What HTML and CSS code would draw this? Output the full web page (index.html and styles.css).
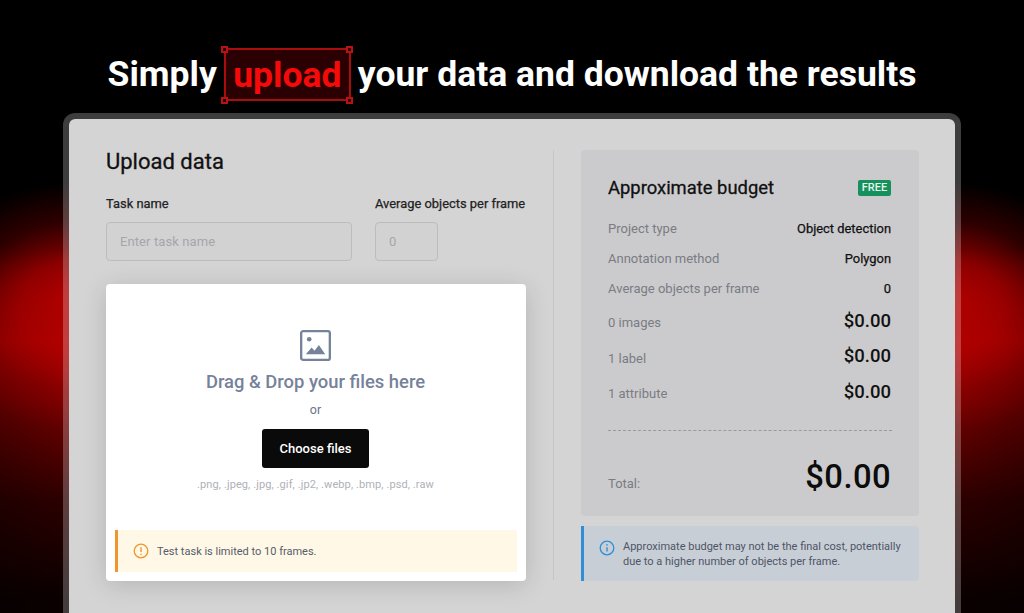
FILE: index.html
```html
<!DOCTYPE html>
<html lang="en">
<head>
<meta charset="utf-8">
<title>Upload data</title>
<link rel="stylesheet" href="styles.css">
</head>
<body>
<div class="stage">
  <h1 class="headline">
    <span>Simply</span>
    <span class="selection">upload
      <i class="handle tl"></i><i class="handle tr"></i><i class="handle bl"></i><i class="handle br"></i>
    </span>
    <span>your data and download the results</span>
  </h1>
  <div class="window">
    <section class="left">
      <h2 class="title">Upload data</h2>
      <div class="fields">
        <div class="field grow">
          <label class="label">Task name</label>
          <div class="input">Enter task name</div>
        </div>
        <div class="field">
          <label class="label">Average objects per frame</label>
          <div class="input small">0</div>
        </div>
      </div>
      <div class="drop">
        <svg class="image-icon" width="31" height="31" viewBox="0 0 32 32" fill="none">
          <rect x="1.2" y="1.2" width="29.6" height="29.6" rx="2" stroke="#76829a" stroke-width="2.4"/>
          <circle cx="9.5" cy="9.5" r="2.4" fill="#76829a"/>
          <path d="M6 25l6-7 3 3.5 4.5-6L26 25z" fill="#76829a"/>
        </svg>
        <div class="drag">Drag &amp; Drop your files here</div>
        <div class="or">or</div>
        <div class="button">Choose files</div>
        <div class="formats">.png, .jpeg, .jpg, .gif, .jp2, .webp, .bmp, .psd, .raw</div>
        <div class="alert warn">
          <svg width="16" height="16" viewBox="0 0 16 16" fill="none">
            <circle cx="8" cy="8" r="6.8" stroke="#f0962e" stroke-width="1.3"/>
            <path d="M8 4.3v4.6" stroke="#f0962e" stroke-width="1.4"/>
            <circle cx="8" cy="11.2" r=".8" fill="#f0962e"/>
          </svg>
          <span>Test task is limited to 10 frames.</span>
        </div>
      </div>
    </section>
    <div class="divider"></div>
    <section class="right">
      <div class="budget">
        <div class="budget-head">
          <h3 class="budget-title">Approximate budget</h3>
          <span class="free">FREE</span>
        </div>
        <div class="row"><span class="key">Project type</span><span class="val">Object detection</span></div>
        <div class="row"><span class="key">Annotation method</span><span class="val">Polygon</span></div>
        <div class="row"><span class="key">Average objects per frame</span><span class="val">0</span></div>
        <div class="row price"><span class="key">0 images</span><span class="amount">$0.00</span></div>
        <div class="row price"><span class="key">1 label</span><span class="amount">$0.00</span></div>
        <div class="row price"><span class="key">1 attribute</span><span class="amount">$0.00</span></div>
        <div class="dash"></div>
        <div class="total"><span class="key">Total:</span><span class="total-amount">$0.00</span></div>
      </div>
      <div class="alert info">
        <svg width="16" height="16" viewBox="0 0 16 16" fill="none">
          <circle cx="8" cy="8" r="6.8" stroke="#2f8fd6" stroke-width="1.3"/>
          <path d="M8 7.2v4.4" stroke="#2f8fd6" stroke-width="1.4"/>
          <circle cx="8" cy="4.9" r=".8" fill="#2f8fd6"/>
        </svg>
        <span>Approximate budget may not be the final cost, potentially due to a higher number of objects per frame.</span>
      </div>
    </section>
  </div>
</div>
</body>
</html>
```
FILE: styles.css
```css
* { box-sizing: border-box; }
html, body { margin: 0; height: 613px; overflow: hidden; background: #000; }
body { font-family: Roboto, "Liberation Sans", sans-serif; }
.stage {
  width: 1024px; height: 613px; overflow: hidden;
  padding-top: 48px;
  background:
    radial-gradient(ellipse 170px 130px at 80px 305px, #b40000 0%, rgba(176,0,0,.75) 35%, rgba(150,0,0,.3) 65%, rgba(150,0,0,0) 95%),
    radial-gradient(ellipse 170px 130px at 944px 305px, #b40000 0%, rgba(176,0,0,.75) 35%, rgba(150,0,0,.3) 65%, rgba(150,0,0,0) 95%),
    linear-gradient(90deg, rgba(0,0,0,.25) 0, rgba(0,0,0,0) 64px, rgba(0,0,0,0) 960px, rgba(0,0,0,.25) 1024px),
    linear-gradient(180deg, #000 0, #000 250px, #a80000 340px, #8a0000 380px, #600000 430px, #2c0000 500px, #0a0000 600px);
  background-repeat: no-repeat;
}
.headline {
  margin: 0; height: 65px;
  display: flex; justify-content: center; align-items: flex-start; gap: 7px;
  color: #fff; font-size: 35.5px; font-weight: 700; line-height: 52px; white-space: nowrap;
}
.selection {
  position: relative; width: 127px; height: 53px;
  line-height: 51px; text-align: center;
  color: #f50a0a; background: #2a0002; border: 2px solid #a80e0e;
}
.handle {
  position: absolute; width: 7px; height: 7px;
  border: 2px solid #b81212; background: #2a0002;
}
.tl { left: -4.5px; top: -4.5px; } .tr { right: -4.5px; top: -4.5px; }
.bl { left: -4.5px; bottom: -4.5px; } .br { right: -4.5px; bottom: -4.5px; }
.window {
  width: 898px; height: 520px; margin-left: 63px;
  border: 6px solid rgba(255,255,255,.24); border-bottom: 0; border-radius: 12px 12px 0 0;
  background: #d4d4d4; background-clip: padding-box;
  display: grid; grid-template-columns: 420px 55px 338px;
  padding: 31px 0 0 37px; align-items: start;
}
.left { height: 431px; }
.title { margin: 0; font-size: 22px; font-weight: 400; -webkit-text-stroke: .3px currentColor; line-height: 24px; color: #111; }
.fields { display: flex; gap: 23px; margin-top: 22px; }
.grow { flex: none; width: 246px; }
.field { display: flex; flex-direction: column; }
.label { font-size: 12.9px; font-weight: 400; -webkit-text-stroke: .25px currentColor; line-height: 16px; color: #222; white-space: nowrap; }
.input {
  margin-top: 10px; height: 39px; padding: 0 13px;
  border: 1.3px solid #bcbcc0; border-radius: 4px; background: #d2d2d3;
  font-size: 13px; line-height: 37px; color: #a5a6ab; letter-spacing: .1px;
}
.small { width: 63px; }
.drop {
  height: 297px; margin-top: 23px; padding: 46px 10px 0 9px; background: #fff; border-radius: 4px;
  box-shadow: 0 4px 24px rgba(0,0,0,.15);
  display: flex; flex-direction: column; align-items: center;
}
.image-icon { display: block; flex: none; }
.drag { margin-top: 9px; font-size: 18.4px; font-weight: 500; line-height: 24px; color: #76829a; white-space: nowrap; }
.or { margin-top: 8px; font-size: 12.5px; line-height: 16px; color: #6b7488; }
.button {
  margin-top: 11px; width: 107px; height: 39px; background: #0a0a0a; border-radius: 3px;
  color: #fff; font-size: 13px; font-weight: 500; line-height: 39px; text-align: center;
}
.formats { margin-top: 10px; font-size: 11px; line-height: 14px; letter-spacing: .1px; color: #aeb1b8; white-space: nowrap; }
.alert { display: flex; font-size: 11px; color: #555c6c; }
.warn {
  flex: none; align-self: flex-start;
  width: 402px; height: 42px; margin-top: auto; margin-bottom: 9px; align-items: center; gap: 8px;
  padding-left: 15px; background: #fff8e6; border-left: 3px solid #f0962e;
}
.divider { width: 1px; height: 430px; margin-left: 27px; background: #c6c6c7; }
.budget {
  height: 366px; padding: 26px 28px 0 27px; background: #cbcbcd; border-radius: 4px;
}
.budget-head { display: flex; justify-content: space-between; align-items: center; height: 24px; }
.budget-title { margin: 0; font-size: 18.4px; font-weight: 400; -webkit-text-stroke: .3px currentColor; color: #111; line-height: 24px; }
.free {
  width: 33px; height: 16px; border-radius: 2px; background: #15915c; color: #e8f3ee;
  font-size: 11px; font-weight: 500; line-height: 16px; text-align: center;
}
.row { display: flex; justify-content: space-between; align-items: center; height: 30px; }
.budget-head + .row { margin-top: 13px; }
.key { font-size: 13px; color: #7a7c84; }
.val { font-size: 12.9px; font-weight: 400; -webkit-text-stroke: .25px currentColor; color: #111; }
.price { height: 35.6px; }
.price .key { margin-top: 4px; }
.amount { font-size: 18.5px; font-weight: 500; color: #111; }
.dash { margin: 20px -1px 0 0; border-top: 1px dashed #9a9a9e; }
.total { display: flex; justify-content: space-between; align-items: baseline; margin-top: 24px; }
.total-amount { font-size: 32.8px; font-weight: 500; color: #0c0c0c; letter-spacing: .4px; line-height: 44px; }
.info {
  height: 55px; margin-top: 10px; padding: 14px 10px 0 15px; gap: 8px;
  background: #c8ced6; border-left: 3px solid #2f8fd6; border-radius: 0 4px 4px 0;
  line-height: 14.5px; font-size: 11px; color: #4d5566;
}
.info svg { flex: none; }
```
